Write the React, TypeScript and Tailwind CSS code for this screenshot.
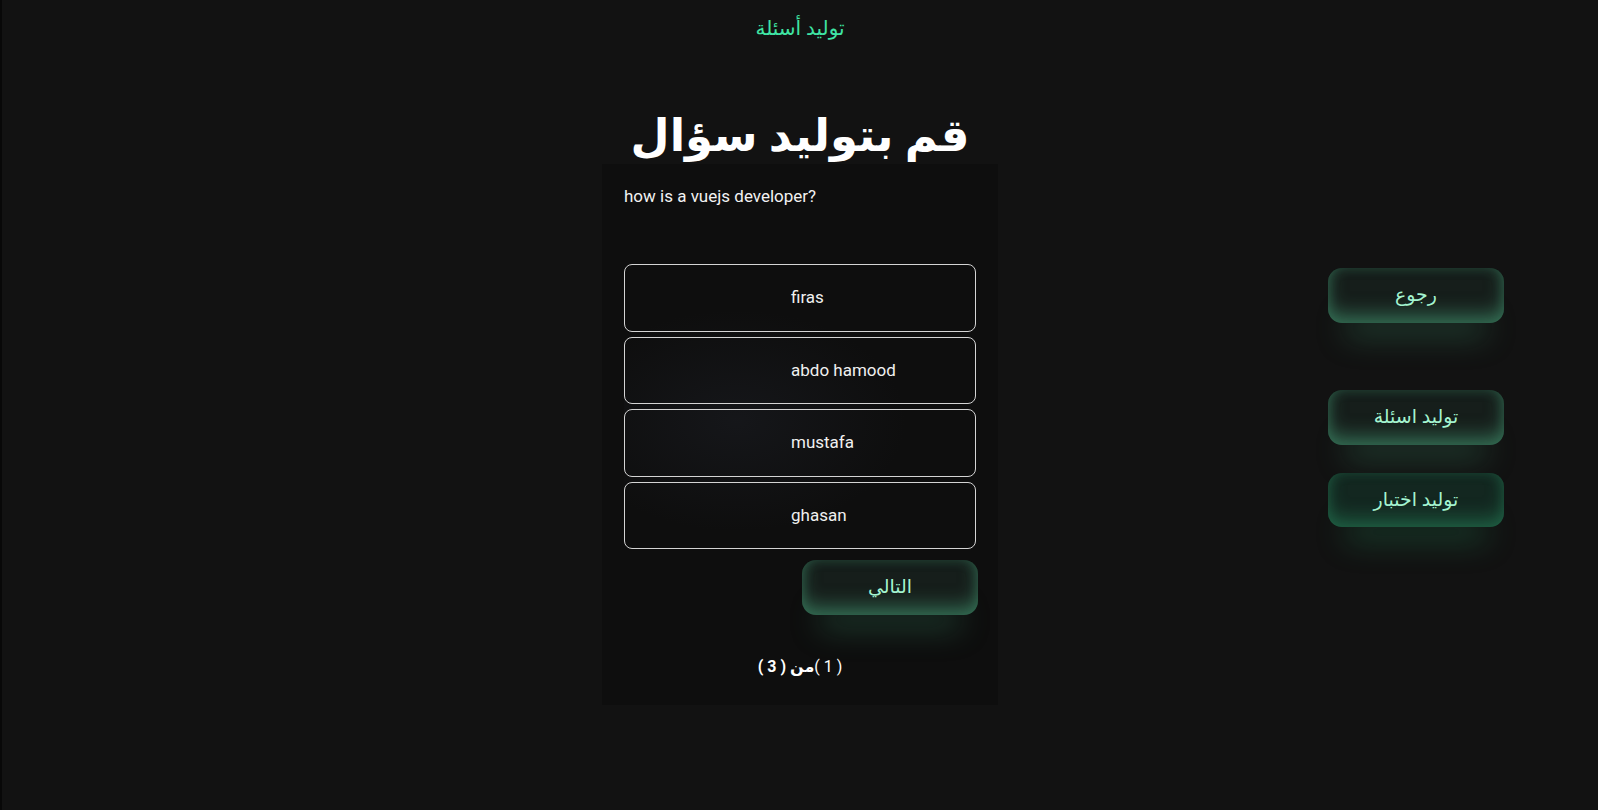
import React from 'react';

const options = ['firas', 'abdo hamood', 'mustafa', 'ghasan'];

const glowBtn =
  'flex items-center justify-center w-[176px] h-[55px] rounded-[14px] text-[19px] text-[#a4f4d0] bg-[#161e1b] shadow-[inset_0_-10px_18px_rgba(72,160,120,0.5),inset_0_0_12px_rgba(60,140,105,0.3),0_32px_30px_-18px_rgba(60,150,110,0.35)]';

export default function App() {
  return (
    <div
      className="min-h-[810px] bg-[#121212] border-l-2 border-[#080808] text-white"
      style={{ fontFamily: 'Roboto, "DejaVu Sans", sans-serif' }}
    >
      {/* top link */}
      <div className="flex justify-center pt-[16px]">
        <a dir="rtl" className="text-[20px] text-[#3fe4a4] leading-6">
          توليد أسئلة
        </a>
      </div>

      {/* title */}
      <h1
        dir="rtl"
        className="mt-[68px] text-center text-[45px] font-bold leading-[56px]"
      >
        قم بتوليد سؤال
      </h1>

      <div className="grid grid-cols-[1fr_396px_1fr]">
        <div />

        {/* quiz card */}
        <div className="bg-[#0e0e0e] px-[22px] pt-[20px] pb-[26px] h-[541px] flex flex-col">
          <p className="text-[17px] leading-6 text-[#f2f2f2]">how is a vuejs developer?</p>

          <div className="mt-[56px] flex flex-col gap-[5px] bg-[radial-gradient(ellipse_at_32%_55%,rgba(40,44,56,0.28),transparent_50%)]">
            {options.map((o) => (
              <button
                key={o}
                className="h-[67.5px] w-full rounded-[8px] border border-[#d4d4d4] text-left pl-[166px] text-[17px] text-[#f0f0f0]"
              >
                {o}
              </button>
            ))}
          </div>

          <div className="mt-[11px] flex justify-end -mr-[2px]">
            <button className={glowBtn} dir="rtl">
              التالي
            </button>
          </div>

          <div dir="rtl" className="mt-auto flex justify-center text-[16px] leading-6">
            <span className="text-white">( 1 )</span>
            <span className="font-bold">من ( 3 )</span>
          </div>
        </div>

        {/* side actions */}
        <div className="flex justify-end pr-[94px]">
          <div className="flex flex-col pt-[104px]">
            <button className={glowBtn} dir="rtl">
              رجوع
            </button>
            <button className={glowBtn + ' mt-[67px]'} dir="rtl">
              توليد اسئلة
            </button>
            <button
              dir="rtl"
              className="mt-[28px] flex items-center justify-center w-[176px] h-[54px] rounded-[14px] text-[19px] text-[#a4f4d0] bg-[#132720] shadow-[inset_0_-10px_18px_rgba(40,140,95,0.45),inset_0_0_12px_rgba(40,120,85,0.3),0_32px_30px_-18px_rgba(35,140,90,0.38)]"
            >
              توليد اختبار
            </button>
          </div>
        </div>
      </div>
    </div>
  );
}
